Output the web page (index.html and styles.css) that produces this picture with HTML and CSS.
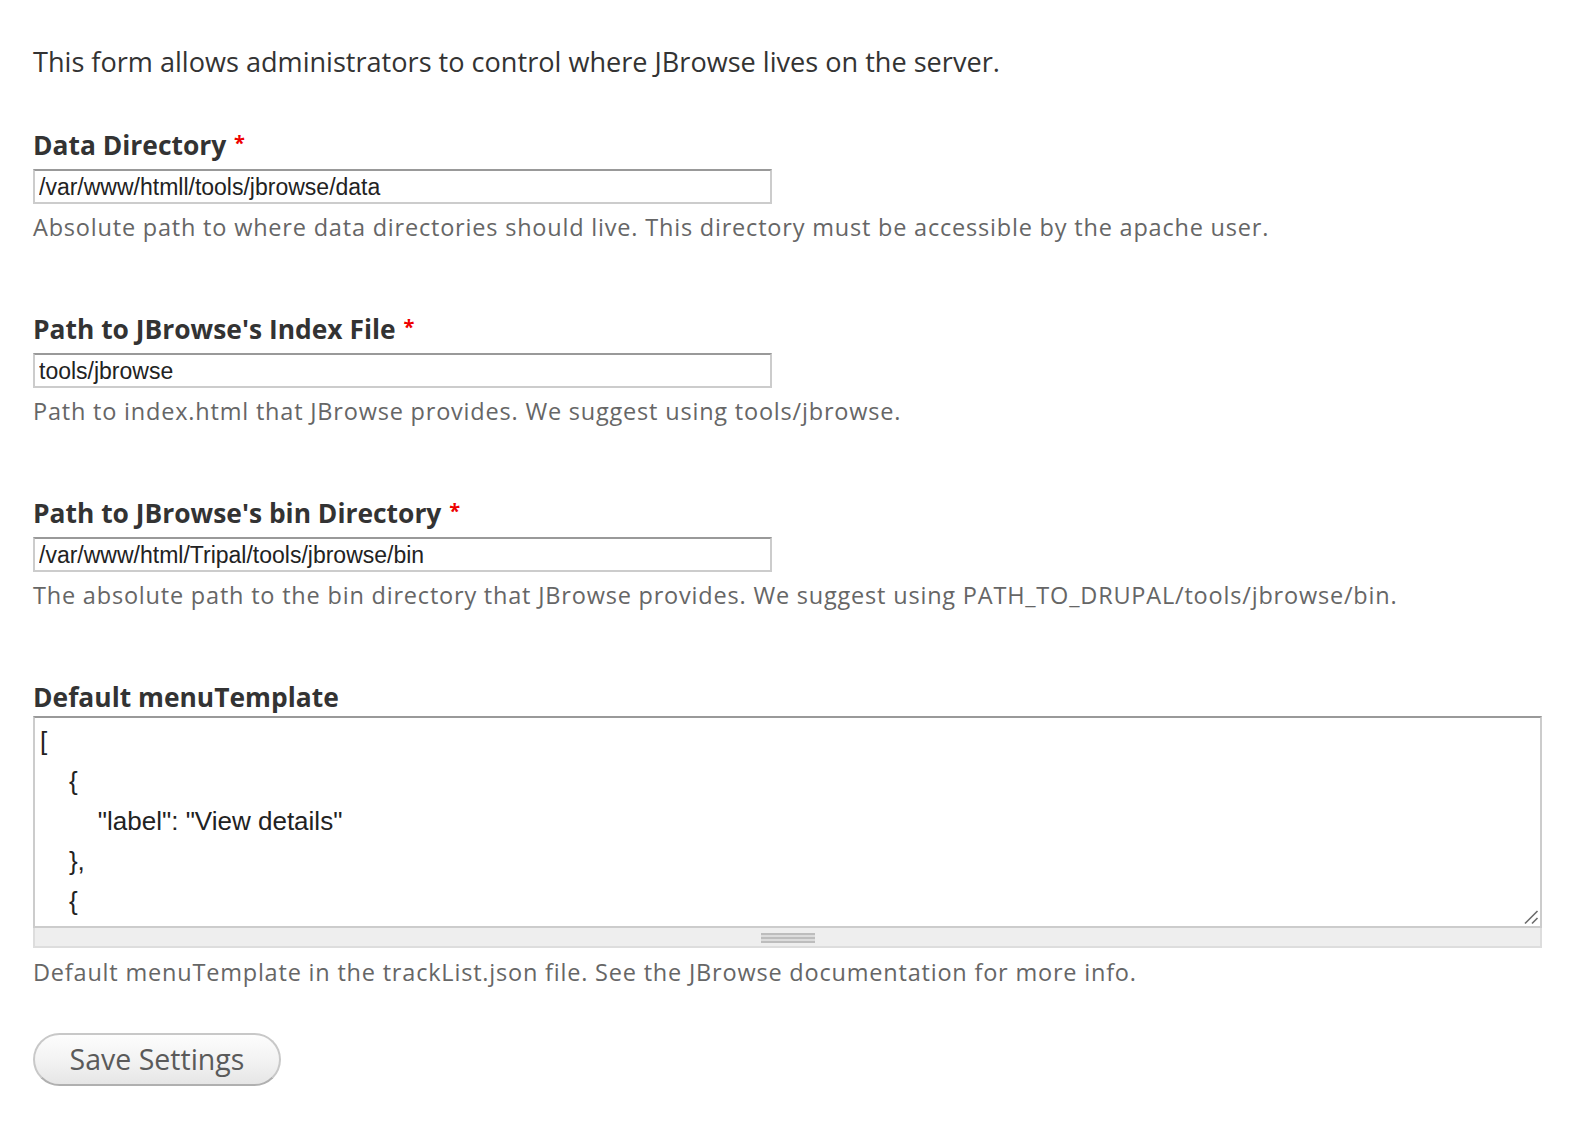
FILE: index.html
```html
<!DOCTYPE html>
<html lang="en">
<head>
<meta charset="utf-8">
<title>JBrowse settings</title>
<link rel="stylesheet" href="styles.css">
</head>
<body>
<form class="settings-form">
  <p class="intro">This form allows administrators to control where JBrowse lives on the server.</p>

  <div class="form-item">
    <label class="form-label" for="data-dir">Data Directory <span class="form-required" title="This field is required.">*</span></label>
    <input class="form-text" id="data-dir" type="text" value="/var/www/htmll/tools/jbrowse/data">
    <div class="description">Absolute path to where data directories should live. This directory must be accessible by the apache user.</div>
  </div>

  <div class="form-item">
    <label class="form-label" for="index-file">Path to JBrowse's Index File <span class="form-required" title="This field is required.">*</span></label>
    <input class="form-text" id="index-file" type="text" value="tools/jbrowse">
    <div class="description">Path to index.html that JBrowse provides. We suggest using tools/jbrowse.</div>
  </div>

  <div class="form-item">
    <label class="form-label" for="bin-dir">Path to JBrowse's bin Directory <span class="form-required" title="This field is required.">*</span></label>
    <input class="form-text" id="bin-dir" type="text" value="/var/www/html/Tripal/tools/jbrowse/bin">
    <div class="description">The absolute path to the bin directory that JBrowse provides. We suggest using PATH_TO_DRUPAL/tools/jbrowse/bin.</div>
  </div>

  <div class="form-item form-item-textarea">
    <label class="form-label" for="menu-template">Default menuTemplate</label>
    <div class="resizable-textarea">
      <div class="textarea-box">
        <textarea class="form-textarea" id="menu-template">[
    {
        "label": "View details"
    },
    {
        "label": "Highlight this gene"
    }
]</textarea>
        <svg class="resize-corner" width="16" height="16" viewBox="0 0 16 16" aria-hidden="true">
          <path d="M2 14.5 L14.5 2" stroke="#6a6a6a" stroke-width="1.6" fill="none"/>
          <path d="M9 14.5 L14.5 9" stroke="#6a6a6a" stroke-width="1.6" fill="none"/>
        </svg>
      </div>
      <div class="grippie"><span class="grippie-handle"></span></div>
    </div>
    <div class="description">Default menuTemplate in the trackList.json file. See the JBrowse documentation for more info.</div>
  </div>

  <div class="form-actions">
    <button class="form-submit" type="button">Save Settings</button>
  </div>
</form>
</body>
</html>
```

FILE: styles.css
```css
html, body {
  margin: 0;
  padding: 0;
  background: #ffffff;
}

body {
  font-family: "Open Sans", "DejaVu Sans", sans-serif;
  color: #333333;
}

.settings-form {
  padding: 43px 33px 30px 33px;
}

.intro {
  margin: 0;
  font-size: 27.1px;
  line-height: 38px;
  color: #333333;
}

.form-item {
  display: flex;
  flex-direction: column;
  align-items: flex-start;
  margin-top: 44px;
}

.form-item + .form-item {
  margin-top: 66px;
}

.form-item + .form-item-textarea {
  margin-top: 68px;
}

.form-label {
  display: block;
  font-size: 26.4px;
  font-weight: bold;
  line-height: 36px;
  color: #333333;
}

.form-required {
  color: #ee0000;
  font-size: 20px;
  vertical-align: 5px;
  margin-left: 1px;
}

.form-text {
  box-sizing: border-box;
  margin: 6px 0 0 0;
  width: 739px;
  height: 35px;
  padding: 1px 4px 0 4px;
  border: 2px solid #cccccc;
  border-top-color: #999999;
  border-radius: 0;
  background: #ffffff;
  font-family: "Liberation Sans", Arial, sans-serif;
  font-size: 23px;
  color: #222222;
  outline: none;
}

.description {
  margin-top: 7px;
  font-size: 23.5px;
  letter-spacing: 0.8px;
  line-height: 32px;
  color: #666666;
}

.form-item-textarea .form-label {
  margin-bottom: 1px;
}

.resizable-textarea {
  align-self: stretch;
  width: 1509px;
}

.textarea-box {
  position: relative;
}

.form-textarea {
  display: block;
  box-sizing: border-box;
  width: 100%;
  height: 212px;
  margin: 0;
  padding: 3px 5px 5px 5px;
  border: 2px solid #cccccc;
  border-top-color: #999999;
  border-radius: 0;
  background: #ffffff;
  font-family: "Liberation Sans", Arial, sans-serif;
  font-size: 26px;
  line-height: 40px;
  color: #222222;
  resize: none;
  overflow: hidden;
  outline: none;
  tab-size: 4;
}

.resize-corner {
  position: absolute;
  right: 3px;
  bottom: 3px;
}

.grippie {
  box-sizing: border-box;
  height: 20px;
  background: #eeeeee;
  border: 2px solid #dddddd;
  border-top: 0;
  display: flex;
  justify-content: center;
  align-items: center;
}

.grippie-handle {
  display: block;
  width: 54px;
  height: 10px;
  margin-top: 2px;
  background: repeating-linear-gradient(to bottom, #bdbdbd 0 2px, #dcdcdc 2px 4px);
}

.form-item-textarea .description {
  margin-top: 8px;
}

.form-actions {
  margin-top: 45px;
}

.form-submit {
  box-sizing: border-box;
  width: 248px;
  height: 53px;
  padding: 0 0 2px 0;
  border: 2px solid #c8c8c8;
  border-bottom-color: #b0b0b0;
  border-radius: 27px;
  background: linear-gradient(to bottom, #fdfdfd 0%, #f3f3f3 50%, #e6e6e6 100%);
  font-family: "Open Sans", "DejaVu Sans", sans-serif;
  font-size: 28.5px;
  color: #5a5a5a;
  cursor: pointer;
}
```
